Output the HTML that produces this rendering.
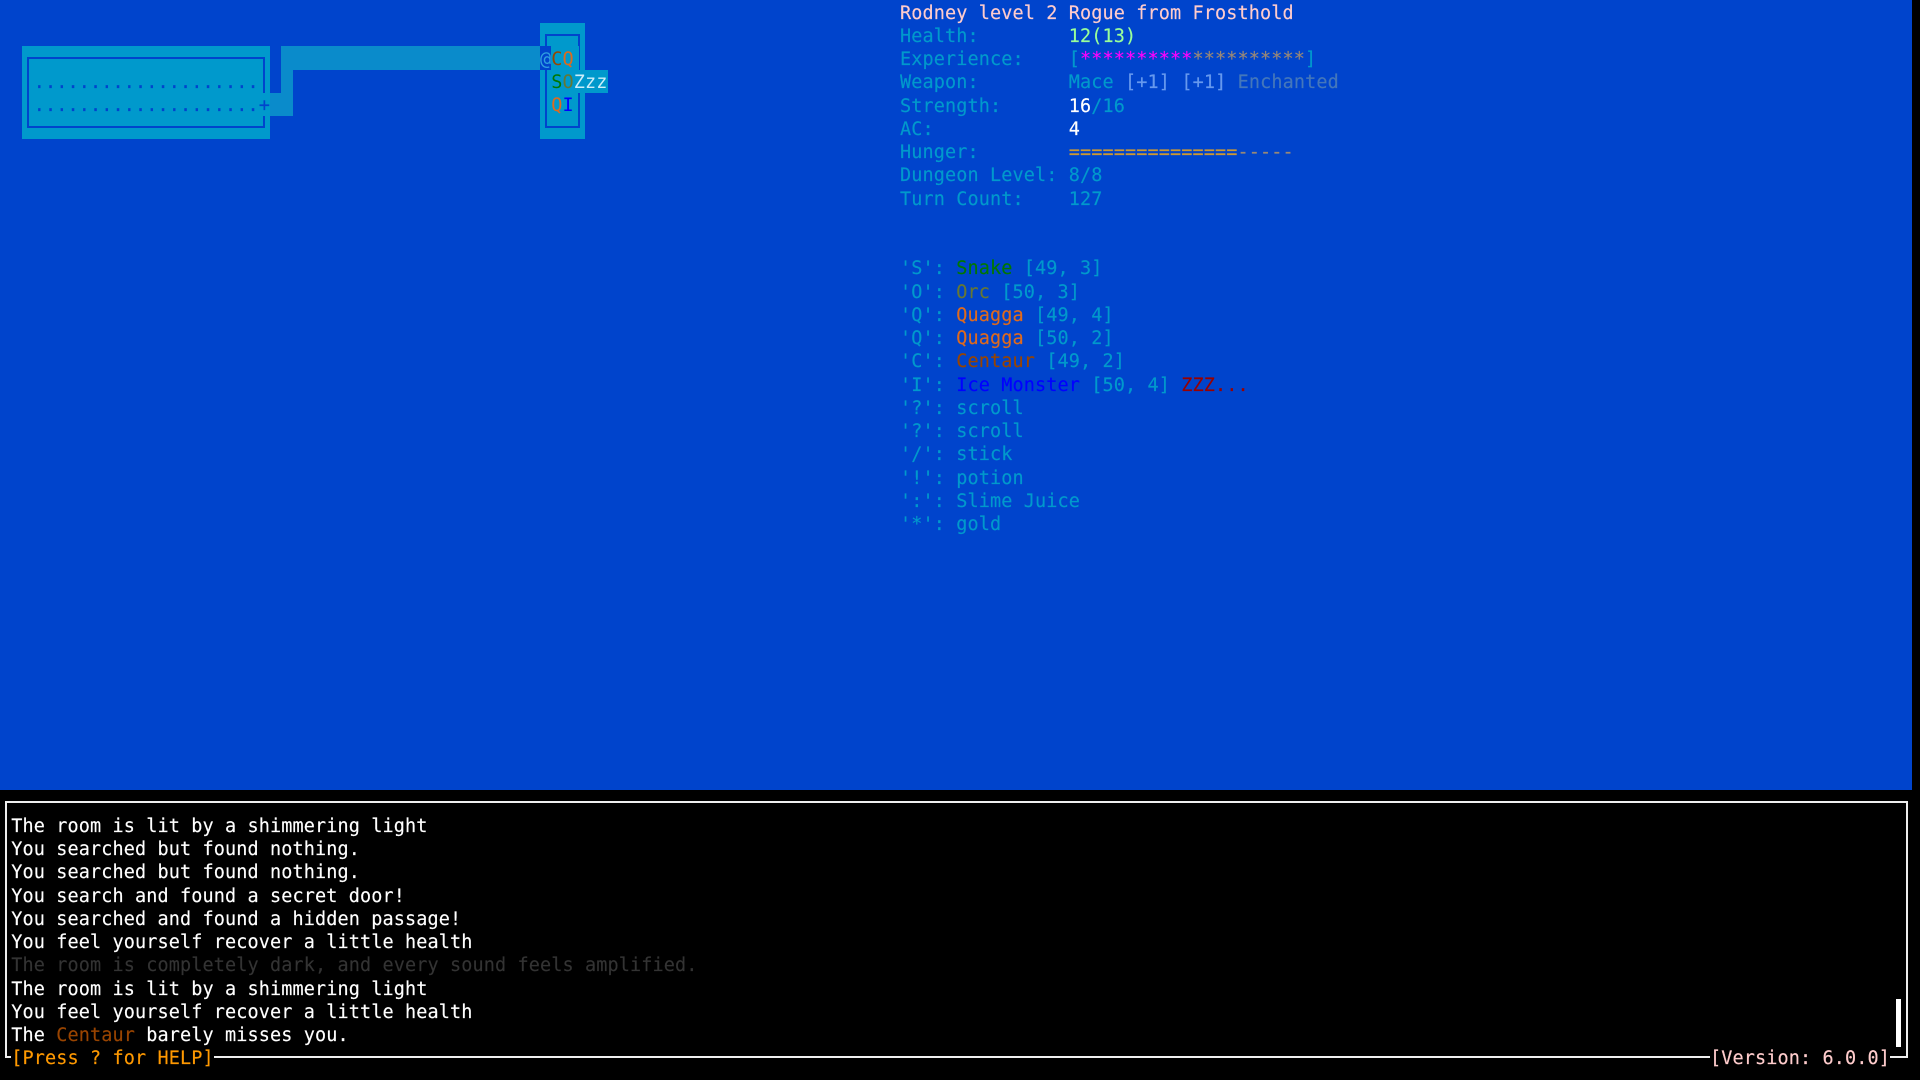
<!DOCTYPE html>
<html lang="en">
<head>
<meta charset="utf-8">
<title>Rogue</title>
<style>
html,body{margin:0;padding:0;width:1920px;height:1080px;overflow:hidden;background:#000}
#top{position:absolute;left:0;top:0;width:1912px;height:790px;background:#0044cc}
.b{position:absolute}
pre{position:absolute;margin:0;left:0;font-family:"DejaVu Sans Mono","Liberation Mono",monospace;font-size:18.5px;letter-spacing:.113px;line-height:23.25px;white-space:pre;font-variant-ligatures:none;-webkit-text-stroke:.15px currentColor}
.c{color:#0099cc}.p{color:#ffcccc}.g{color:#99ff99}.m{color:#ff00ff}.y{color:#998877}
.w1{color:#6699ee}.w2{color:#4477bb}.wh{color:#fff}.o{color:#cc9933}
.sn{color:#007700}.or{color:#667733}.q{color:#e06a1c}.ce{color:#994400}.ic{color:#0000ff}.z{color:#990000}
.d{color:#0044cc}.dim{color:#333}.h{color:#ff9900}
.t{position:absolute;font-family:"DejaVu Sans Mono","Liberation Mono",monospace;font-size:18.5px;line-height:23.25px;white-space:pre;width:11.25px;text-align:center}
</style>
</head>
<body>
<div id="top"></div>

<!-- room 1 -->
<div class="b" style="left:22px;top:46px;width:248px;height:93px;background:#0099cc"></div>
<div class="b" style="left:27px;top:57px;width:238px;height:71px;border:2px solid #0044cc;box-sizing:border-box"></div>
<!-- corridor -->
<div class="b" style="left:281px;top:46px;width:259px;height:24px;background:#0a8bcb"></div>
<div class="b" style="left:281px;top:46px;width:12px;height:70px;background:#0a8bcb"></div>
<div class="b" style="left:270px;top:93px;width:23px;height:23px;background:#0a8bcb"></div>
<div class="b" style="left:263px;top:93px;width:7px;height:23px;background:#0099cc"></div>
<!-- room 2 -->
<div class="b" style="left:540px;top:23px;width:45px;height:116px;background:#0099cc"></div>
<div class="b" style="left:545px;top:34px;width:35px;height:94px;border:2px solid #0044cc;box-sizing:border-box"></div>
<div class="b" style="left:540px;top:46px;width:11px;height:24px;background:#0044cc"></div>
<div class="b" style="left:551px;top:46px;width:34px;height:24px;background:#0099cc;clip-path:inset(0 6px 0 0)"></div>
<div class="b" style="left:573px;top:70px;width:35px;height:23px;background:#0099cc"></div>

<pre class="d" style="top:71px;left:33.75px">....................</pre>
<pre class="d" style="top:94px;left:33.75px">....................+</pre>

<span class="t" style="left:540px;top:47.5px;color:#2f9fe0">@</span>
<span class="t ce" style="left:551.25px;top:47.5px">C</span>
<span class="t q" style="left:562.5px;top:47.5px">Q</span>
<span class="t sn" style="left:551.25px;top:70.75px">S</span>
<span class="t or" style="left:562.5px;top:70.75px">O</span>
<span class="t" style="left:573.75px;top:70.75px;color:#cdeefa">Z</span>
<span class="t" style="left:585px;top:70.75px;color:#cdeefa">z</span>
<span class="t" style="left:596.25px;top:70.75px;color:#cdeefa">z</span>
<span class="t q" style="left:551.25px;top:94px">Q</span>
<span class="t ic" style="left:562.5px;top:94px">I</span>

<!-- stats -->
<pre class="c" style="left:900px;top:1.5px"><span class="p">Rodney level 2 Rogue from Frosthold</span>
Health:        <span class="g">12(13)</span>
Experience:    [<span class="m">**********</span><span class="y">**********</span>]
Weapon:        Mace <span class="w1">[+1]</span> <span class="w1">[+1]</span> <span class="w2">Enchanted</span>
Strength:      <span class="wh">16</span>/16
AC:            <span class="wh">4</span>
Hunger:        <span class="o">===============</span><span class="y">-----</span>
Dungeon Level: 8/8
Turn Count:    127


'S': <span class="sn">Snake</span> [49, 3]
'O': <span class="or">Orc</span> [50, 3]
'Q': <span class="q">Quagga</span> [49, 4]
'Q': <span class="q">Quagga</span> [50, 2]
'C': <span class="ce">Centaur</span> [49, 2]
'I': <span class="ic">Ice Monster</span> [50, 4] <span class="z">ZZZ...</span>
'?': scroll
'?': scroll
'/': stick
'!': potion
':': Slime Juice
'*': gold</pre>

<!-- message log frame -->
<div class="b" style="left:5px;top:801px;width:1903px;height:257px;border:2px solid #eee;box-sizing:border-box"></div>
<div class="b" style="left:11px;top:1050px;width:203px;height:19px;background:#000"></div>
<div class="b" style="left:1710px;top:1050px;width:180px;height:19px;background:#000"></div>
<div class="b" style="left:1896px;top:999px;width:5px;height:48px;background:#fff"></div>

<pre class="wh" style="left:11.25px;top:814.75px">The room is lit by a shimmering light
You searched but found nothing.
You searched but found nothing.
You search and found a secret door!
You searched and found a hidden passage!
You feel yourself recover a little health
<span class="dim">The room is completely dark, and every sound feels amplified.</span>
The room is lit by a shimmering light
You feel yourself recover a little health
The <span class="ce">Centaur</span> barely misses you.
<span class="h">[Press ? for HELP]</span></pre>
<pre class="p" style="left:1710px;top:1047.25px">[Version: 6.0.0]</pre>
</body>
</html>
